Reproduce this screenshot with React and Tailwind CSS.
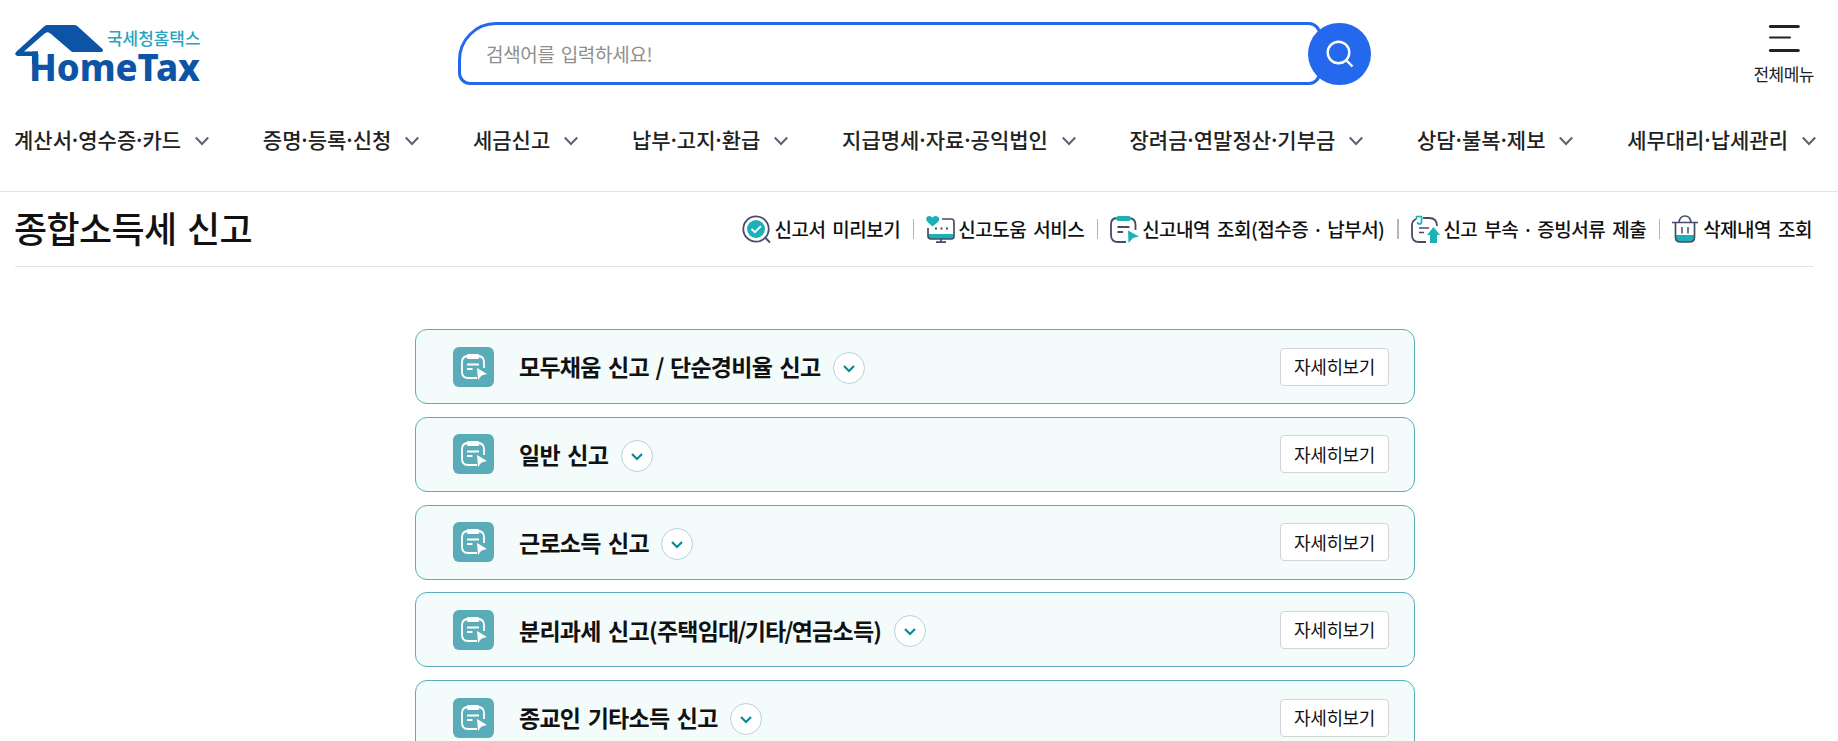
import clsx from 'clsx';

const NAV_ITEMS = [
  '계산서·영수증·카드',
  '증명·등록·신청',
  '세금신고',
  '납부·고지·환급',
  '지급명세·자료·공익법인',
  '장려금·연말정산·기부금',
  '상담·불복·제보',
  '세무대리·납세관리',
];

const REPORTS = [
  '모두채움 신고 / 단순경비율 신고',
  '일반 신고',
  '근로소득 신고',
  '분리과세 신고(주택임대/기타/연금소득)',
  '종교인 기타소득 신고',
];

// Tightens the separators (· and /), which sit too loose between Hangul
const Tight = ({ text, className }) =>
  text.split(/([·/])/).map((part, i) =>
    i % 2 ? (
      <span key={i} className={className}>
        {part}
      </span>
    ) : (
      part
    )
  );

const Logo = () => (
  <svg width="187" height="68" viewBox="0 0 187 68" className="shrink-0 overflow-visible">
    <path
      d="M32 1h27q2 0 3.500 1.300L87.500 25q1.500 3-1.500 3H57L36 10q-3.500-3.500-7 0L9 27.500h14V32H2.500Q-1.500 31 1.500 27.500L29 2.500Q30.500 1 32 1z"
      fill="#0d54a6"
    />
    <path d="M17 27.500h6V40h-6z" fill="#0d54a6" />
    <text x="92" y="20.500" fontSize="17" fontWeight="500" fill="#2aa3bf" textLength="93.500" lengthAdjust="spacingAndGlyphs">
      국세청홈택스
    </text>
    <text x="14" y="57" fontSize="38" fontWeight="800" fill="#0d54a6" textLength="171" lengthAdjust="spacingAndGlyphs" fontFamily="Noto Sans">
      HomeTax
    </text>
  </svg>
);

const PreviewIcon = () => (
  <svg width="29" height="29" viewBox="0 0 29 29" fill="none">
    <circle cx="14" cy="14" r="12.700" stroke="#484b67" strokeWidth="1.800" />
    <path d="M23.500 23l4.500 4.500" stroke="#484b67" strokeWidth="1.800" />
    <circle cx="14" cy="14" r="9" fill="#1eb0b8" />
    <path d="M9.500 14l3.400 3.200 6-6" stroke="#fff" strokeWidth="1.800" />
  </svg>
);

const HelpIcon = () => (
  <svg width="29" height="29" viewBox="0 0 29 29" fill="none">
    <path d="M2 19h25v2q0 3-3 3H5q-3 0-3-3z" fill="#1eb0b8" />
    <path d="M16 4h9q3 0 3 3v14q0 3-3 3H5q-3 0-3-3v-8" stroke="#484b67" strokeWidth="1.700" />
    <path d="M15 24v3M10 27.200h10" stroke="#484b67" strokeWidth="1.700" />
    <path d="M9 13.500h2M14.500 13.500h2M20 13.500h2" stroke="#484b67" strokeWidth="2" />
    <path d="M6.500 11.500L1.500 7Q-.8 4 1 2T6.500 2.500Q9.500 0 12 2t0 5z" fill="#1eb0b8" />
  </svg>
);

const HistoryIcon = () => (
  <svg width="29" height="29" viewBox="0 0 29 29" fill="none">
    <path d="M6 3Q1 4 1 9v11q0 7 7 7h8M20 3q5.500 1 5.500 7v5" stroke="#484b67" strokeWidth="1.800" />
    <rect x="6" y="1" width="15" height="5" rx="2.500" fill="#1eb0b8" />
    <path d="M7.500 12h12M7.500 17h5.500" stroke="#484b67" strokeWidth="1.800" />
    <path d="M18 15.500l11 6-6 1.500-4.500 5z" fill="#1eb0b8" />
  </svg>
);

const AttachIcon = () => (
  <svg width="29" height="29" viewBox="0 0 29 29" fill="none">
    <path d="M12 3h6q8 0 8 8M5 4Q1 6 1 10v10q0 7 7 7h7" stroke="#484b67" strokeWidth="1.800" />
    <path d="M5.500 4.500V1.500h5V7q0 2-2 2T6.500 7" stroke="#1eb0b8" strokeWidth="1.700" />
    <path d="M8 13h10M8 17.500h5" stroke="#484b67" strokeWidth="1.700" />
    <path d="M22.500 12l6.500 8h-3v8h-7v-8h-3z" fill="#1eb0b8" />
  </svg>
);

const TrashIcon = () => (
  <svg width="26" height="29" viewBox="0 0 26 29" fill="none">
    <path d="M4 20h18v2q0 5-5 5H9q-5 0-5-5z" fill="#1eb0b8" />
    <path d="M3.500 7.500V22q0 5 5 5h9q5 0 5-5V7.500M0 7.500h26M7 7q1-6 6-6t6 6" stroke="#484b67" strokeWidth="1.700" />
    <path d="M10 12v6.500M16 12v6.500" stroke="#484b67" strokeWidth="1.500" />
  </svg>
);

const LINKS = [
  { label: '신고서 미리보기', Icon: PreviewIcon, iconClass: 'mr-[3px]' },
  { label: '신고도움 서비스', Icon: HelpIcon, iconClass: 'mr-[3px]' },
  { label: '신고내역 조회(접수증 · 납부서)', Icon: HistoryIcon, iconClass: 'mr-[3px]' },
  { label: '신고 부속 · 증빙서류 제출', Icon: AttachIcon, iconClass: 'mr-[3px]', wide: true },
  { label: '삭제내역 조회', Icon: TrashIcon, iconClass: 'mr-[5px]' },
];

const Header = () => (
  <header className="flex h-[192px] flex-col border-b border-[#e2e3e5]">
    <div className="flex h-[108px] items-start justify-between pr-6 pl-[15px]">
      <div className="w-[443px] pt-6">
        <Logo />
      </div>
      <div className="mt-[22px] flex items-center">
        <div className="flex h-[63px] w-[863px] items-center rounded-[12px] rounded-tl-[38px] border-[3px] border-[#2468ee] pl-[25px]">
          <span className="pt-px text-[19px] tracking-[-0.3px] text-[#8e8e8e] [word-spacing:2px]">검색어를 입력하세요!</span>
        </div>
        <button className="mt-px -ml-[13px] flex h-[62px] w-[63px] items-center justify-center rounded-full bg-[#2468ee]" aria-label="검색">
          <svg width="28" height="28" viewBox="0 0 28 28" fill="none" stroke="#fff" strokeWidth="2.400">
            <circle cx="12.500" cy="12.500" r="10.800" />
            <path d="M20 20l6.500 6.500" />
          </svg>
        </button>
      </div>
      <div className="flex w-[443px] justify-end">
        <button className="flex flex-col items-center pt-6">
          <svg width="32" height="29" viewBox="0 0 32 29" stroke="#222" strokeLinecap="round">
            <path d="M2.300 2.500h28M2.300 26.500h28" strokeWidth="3" />
            <path d="M2 13.500h20" strokeWidth="2" />
          </svg>
          <span className="mt-[9px] text-[17px] leading-[24px] tracking-[-0.5px]">전체메뉴</span>
        </button>
      </div>
    </div>
    <nav className="flex h-[63px] items-center justify-between pr-[22px] pl-[14px]">
      {NAV_ITEMS.map((item) => (
        <a key={item} className="flex items-center gap-[14px] text-[21px] font-medium whitespace-nowrap text-[#222]">
          <span>
            <Tight text={item} className="-mx-[2.900px]" />
          </span>
          <svg width="14" height="10" viewBox="0 0 14 10" fill="none" stroke="#5f6073" strokeWidth="2" className="mt-[3px]">
            <path d="M.8 1.500L7 8l6.200-6.500" />
          </svg>
        </a>
      ))}
    </nav>
  </header>
);

const ReportRow = ({ title }) => (
  <li className="flex h-[75px] items-center rounded-[12px] border border-[#5aadb8] bg-[#f3fcfb] pr-[25px] pl-[37px]">
    <span className="flex h-10 w-[41px] items-center justify-center rounded-[6px] bg-[#5aadb8]">
      <svg width="26" height="26" viewBox="0 0 26 26" fill="none">
        <path d="M6 2Q1 3 1 8v10q0 6 6 6h9M18 2q5 1 5 6v6" stroke="#fff" strokeWidth="1.800" />
        <rect x="5.500" y="0" width="13" height="5" rx="2" fill="#fff" />
        <path d="M6 10.500h12M6 15h5.500" stroke="#fff" strokeWidth="1.800" />
        <path d="M16 14l10 6-5.500 1.500L17 26z" fill="#fff" />
      </svg>
    </span>
    <h3 className="ml-[25px] text-[23px] font-bold tracking-[-0.75px] text-[#111] [word-spacing:3px]">
      <Tight text={title} className="-mx-[1px]" />
    </h3>
    <button className="mt-[3px] ml-[12.500px] flex size-8 items-center justify-center rounded-full border border-[#b4d5da] bg-white" aria-label="펼치기">
      <svg width="12" height="8" viewBox="0 0 12 8" fill="none" stroke="#058c96" strokeWidth="2.200" className="mt-0.5">
        <path d="M1 1l5 5 5-5" />
      </svg>
    </button>
    <button className="ml-auto h-[38px] w-[109px] rounded-[4px] border border-[#d3d4d8] bg-white text-[18px] tracking-[-0.4px] text-[#111]">
      자세히보기
    </button>
  </li>
);

export default function App() {
  return (
    <div className="h-[741px] overflow-hidden bg-white font-['Noto_Sans_CJK_KR',sans-serif] text-[#222]">
      <Header />
      <main>
        <div className="mr-6 ml-[15px] flex h-[75px] items-center justify-between border-b border-[#e2e3e5]">
          <h2 className="-ml-px pb-[5px] text-[36px] font-medium tracking-[-0.6px] text-[#111] [word-spacing:3px]">종합소득세 신고</h2>
          <ul className="flex items-center pr-[2px]">
            {LINKS.map(({ label, Icon, iconClass, wide }, i) => (
              <li key={label} className="flex items-center">
                {i > 0 && <span className={clsx('mr-3 ml-[13px] h-5 bg-[#b5b5b5]', wide ? 'w-[2px]' : 'w-px')} />}
                <span className={iconClass}>
                  <Icon />
                </span>
                <span className="text-[19px] font-medium tracking-[-0.5px] whitespace-nowrap text-[#111] [word-spacing:3.2px]">
                  <Tight text={label} className="-mx-[2.700px]" />
                </span>
              </li>
            ))}
          </ul>
        </div>
        <ul className="mt-[62px] ml-[415px] flex w-[1000px] flex-col gap-[12.750px]">
          {REPORTS.map((title) => (
            <ReportRow key={title} title={title} />
          ))}
        </ul>
      </main>
    </div>
  );
}
